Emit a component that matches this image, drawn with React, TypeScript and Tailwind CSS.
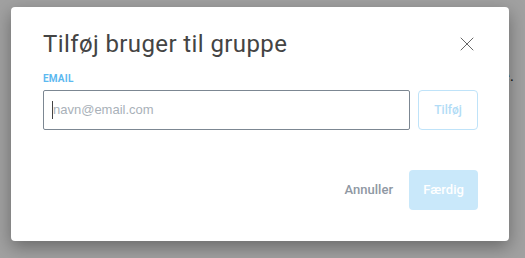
import { X } from 'lucide-react';

export default function App() {
  return (
    <div className="relative h-[258px] w-[525px] overflow-hidden bg-white font-['Liberation_Sans',sans-serif]">
      {/* page behind the dialog */}
      <div className="flex justify-end pr-[11px] pt-[65px] text-[15px] text-[#222]">
        <p>gruppe.</p>
      </div>

      {/* overlay */}
      <div className="absolute inset-0 bg-black/[0.37]" />

      {/* dialog */}
      <div className="absolute left-[11px] top-[7px] flex h-[234px] w-[498px] flex-col rounded-[4px] bg-white pl-[32px] pr-[30px] pt-[21px] shadow-[0_6px_18px_rgba(0,0,0,0.35)]">
        <div className="flex items-start justify-between">
          <h2 className="font-['Roboto',sans-serif] text-[24px] font-normal leading-[32px] tracking-[0.4px] text-[#444]">
            Tilføj bruger til gruppe
          </h2>
          <button className="mt-[4px] text-[#555]">
            <X size={24} strokeWidth={0.9} />
          </button>
        </div>

        <label className="mt-[13px] font-['Roboto',sans-serif] text-[10px] font-bold leading-[12px] tracking-[0.2px] text-[#5cb9f0]">
          EMAIL
        </label>

        <div className="mt-[5px] flex gap-2">
          <div className="flex h-10 w-[367px] items-center rounded-[2px] border border-[#7c8792] pl-2">
            <span className="inline-block h-[18px] w-px shrink-0 bg-[#444]" />
            <span className="text-[13px] text-[#a9b1b9]">navn@email.com</span>
          </div>
          <button className="h-10 w-[60px] rounded-[4px] border border-[#bfe3f9] font-['Roboto',sans-serif] text-[12px] font-medium text-[#b2dcf6]">
            Tilføj
          </button>
        </div>

        <div className="mt-10 flex items-center justify-end gap-4">
          <button className="font-['Roboto',sans-serif] text-[13px] font-medium text-[#8f98a3]">Annuller</button>
          <button className="mr-px h-10 w-[69px] rounded-[4px] bg-[#c9e8fa] font-['Roboto',sans-serif] text-[13px] font-medium text-white">
            Færdig
          </button>
        </div>
      </div>
    </div>
  );
}
